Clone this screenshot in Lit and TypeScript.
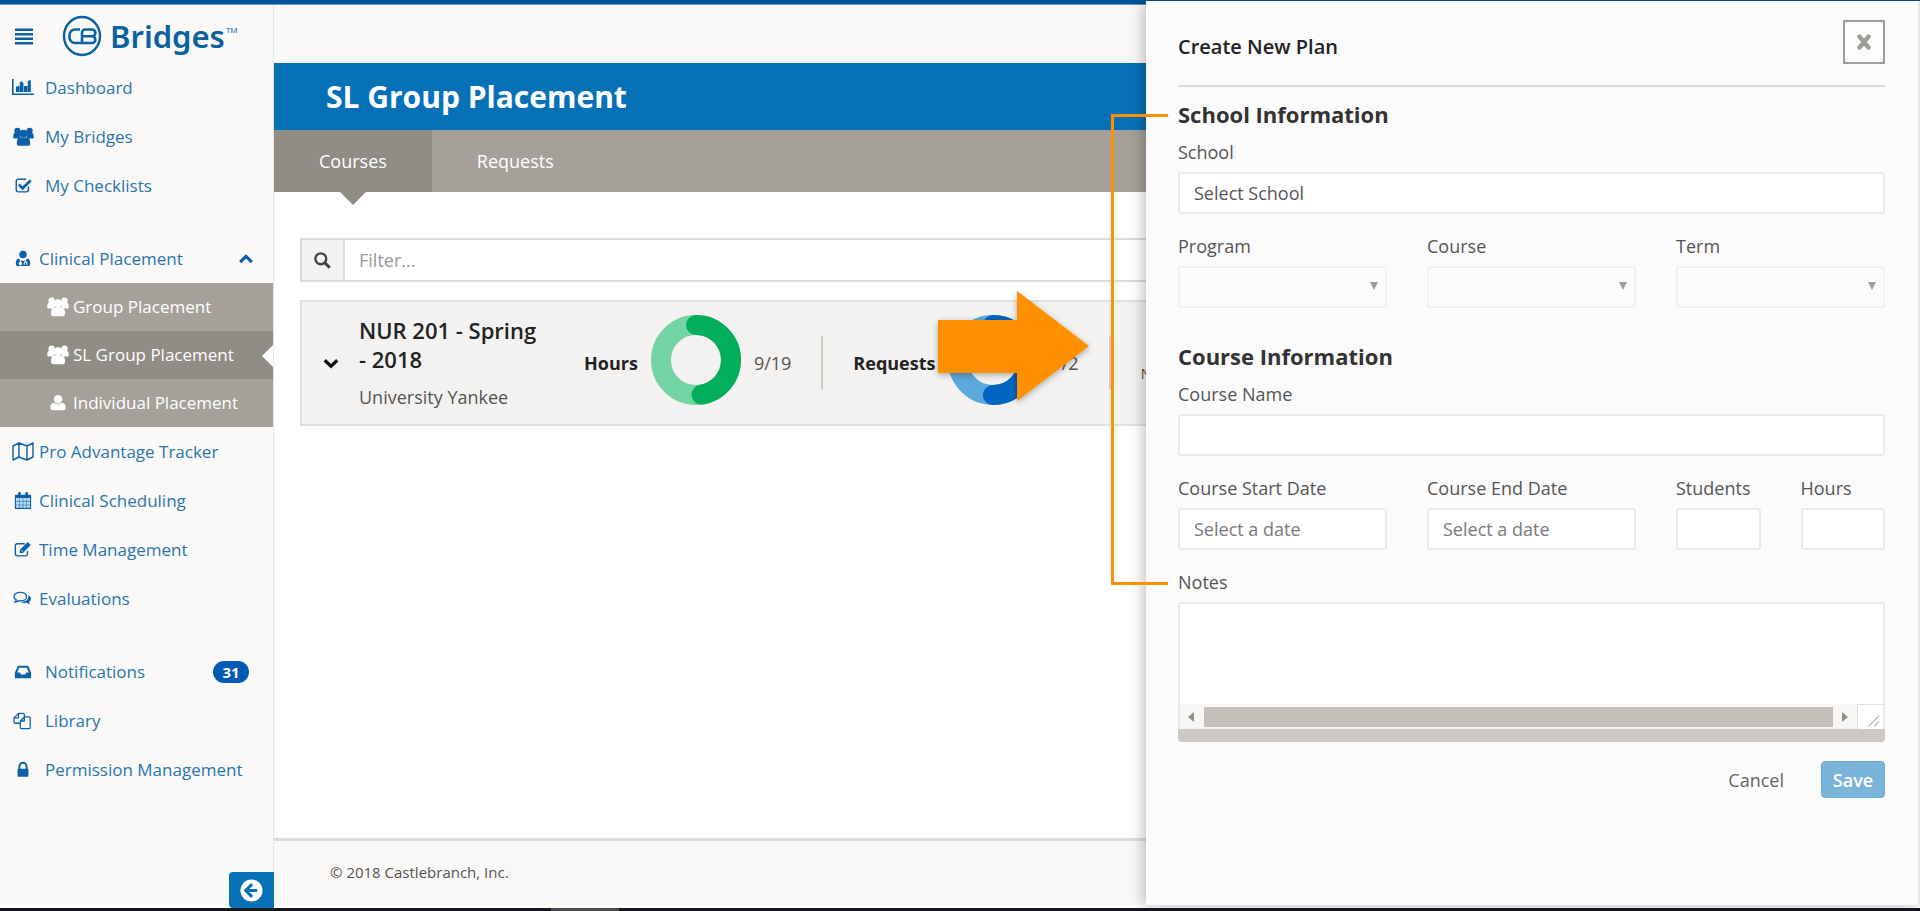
import { LitElement, html, css, svg, nothing } from "lit";
import { customElement, property } from "lit/decorators.js";

const icons: Record<string, any> = {
  bars: svg`<path d="M1 2.500h18v2.500H1zM1 7h18v2.500H1zM1 11.500h18v2.500H1zM1 16h18v2.500H1z"/>`,
  chart: svg`<path d="M0 1h1.600v14.400H22V17H0z"/><path d="M4 8.500L7.500 8v6H4zM7.800 4.500l1.700-1.500 2 2.500v8.500H7.800zM12 8h3.500v6H12zM15.800 3l3-1v12h-3z"/>`,
  users: svg`<circle cx="4.600" cy="3.600" r="3.200"/><circle cx="17.400" cy="3.600" r="3.200"/><path d="M.3 11V8.800c0-2 1-3.300 2.700-3.300h4L7.500 11.500H1.700c-.9 0-1.400-.2-1.400-.5zM21.700 11V8.800c0-2-1-3.300-2.700-3.300h-4l-.5 6h5.800c.9 0 1.400-.2 1.400-.5z"/><circle cx="11" cy="6.600" r="4.300"/><path d="M4 16.500c0-3.600 1-6 3.400-6h7.200c2.400 0 3.400 2.400 3.400 6 0 1.700-.9 2.700-2.300 2.700H6.300C4.900 19.200 4 18.200 4 16.500z"/>`,
  check: svg`<path d="M16 10.500v3.700A2.300 2.300 0 0 1 13.700 16.500H4.800A2.300 2.300 0 0 1 2.500 14.200V4.800A2.300 2.300 0 0 1 4.800 2.500H13.500" fill="none" stroke="currentColor" stroke-width="1.600"/><path d="M5.500 8.500l4 4L18.500 4" fill="none" stroke="currentColor" stroke-width="3"/>`,
  medic: svg`<circle cx="10" cy="5" r="4.200"/><path d="M2 15.500c0-3.700 1-5.700 3.200-6l1.300 1.300v2.500a1.800 1.800 0 1 0 1.200 0V11.500c1.500.8 3.200.8 4.700 0v1.300a2 2 0 0 0-1.600 2v1.700h1.200v-1.700c0-1.100 1.800-1.100 1.800 0v1.700H15v-1.700a2 2 0 0 0-1.500-2v-2l1.400-1.300c2.100.4 3.100 2.300 3.100 6 0 1.500-1 2.300-2.300 2.300H4.300C3 17.800 2 17 2 15.500z"/>`,
  user: svg`<circle cx="10" cy="5.800" r="4.700"/><path d="M1.500 15.300c0-3.400 1.200-5.500 4-5.700 2.500 2.200 6.500 2.200 9 0 2.800.2 4 2.300 4 5.700 0 1.700-1 2.700-2.500 2.700H4c-1.500 0-2.500-1-2.500-2.700z"/>`,
  map: svg`<path d="M1 4l6-3 8 3 6-3v14l-6 3-8-3-6 3zM7 1v14M15 4v14" fill="none" stroke="currentColor" stroke-width="1.400" stroke-linejoin="round"/>`,
  calendar: svg`<path d="M1 4.300C1 3.500 1.500 3 2.300 3h15.400c.8 0 1.300.5 1.300 1.300V7H1z"/><rect x="4.500" y="0" width="3" height="5" rx="1.200"/><rect x="12.500" y="0" width="3" height="5" rx="1.200"/><path d="M1.600 6h16.800v12.200H1.600z" fill="#b8dcf3" stroke="currentColor" stroke-width="1.200"/><path d="M6 7v11M10 7v11M14 7v11M2 10.500h16M2 14.500h16" stroke="currentColor" stroke-width=".6"/>`,
  edit: svg`<path d="M15 11v3.200A2.300 2.300 0 0 1 12.700 16.500H3.800A2.300 2.300 0 0 1 1.500 14.200V5.300A2.300 2.300 0 0 1 3.800 3H12" fill="none" stroke="currentColor" stroke-width="1.500"/><path d="M6.500 9.800L15.300 1l3.400 3.400-8.800 8.800H6.500z"/><path d="M8 10l1.800 1.800" stroke="#faf9f7" stroke-width="1"/>`,
  comments: svg`<path d="M8 2.700c4 0 7 2 7 4.700s-3 4.700-7 4.700c-.7 0-1.300 0-1.900-.2-1 .8-2.300 1.300-3.800 1.400.7-.7 1.100-1.500 1.200-2.400C1.800 10 1 8.800 1 7.400c0-2.700 3-4.700 7-4.700z" fill="none" stroke="currentColor" stroke-width="1.500"/><path d="M16.600 5.500c2 .9 3.200 2.400 3.200 4.200 0 1.500-.8 2.700-2.100 3.600.2.900.6 1.700 1.300 2.400-1.600 0-2.900-.6-3.900-1.400-2.200.4-4.700 0-6.300-1.100 4.700 0 8.200-2.400 8.200-5.800 0-.7-.1-1.300-.4-1.900z"/>`,
  inbox: svg`<path d="M5.500 3h9c.8 0 1.300.3 1.600 1L19 10.500V16c0 .7-.4 1-1 1H2c-.6 0-1-.3-1-1v-5.500L3.900 4c.3-.7.800-1 1.600-1zm.3 2.200L3.600 10.500H6.500l1.200 2.300h4.600l1.200-2.300h2.900l-2.200-5.300z" fill-rule="evenodd"/>`,
  copy: svg`<path d="M8 12.500H2.300A1.300 1.300 0 0 1 1 11.200V6.500L6 1.500h5.200a1.300 1.300 0 0 1 1.300 1.300V5M6 1.500v5H1M8 10v7.200a1.300 1.300 0 0 0 1.300 1.300h8.400a1.300 1.300 0 0 0 1.300-1.300V6.800a1.300 1.300 0 0 0-1.300-1.300H12.500zM12.500 5.500V10H8" fill="none" stroke="currentColor" stroke-width="1.400" stroke-linejoin="round"/>`,
  lock: svg`<path d="M6 9V6a4 4 0 0 1 8 0v3" fill="none" stroke="currentColor" stroke-width="2.200"/><rect x="4" y="8.500" width="12" height="9" rx="1"/>`,
  up: svg`<path d="M3.500 13.500L10 7l6.500 6.500" fill="none" stroke="currentColor" stroke-width="3.400"/>`,
  down: svg`<path d="M3 7l7 6.500L17 7" fill="none" stroke="currentColor" stroke-width="3.800"/>`,
  search: svg`<circle cx="8.200" cy="8.200" r="5.700" fill="none" stroke="currentColor" stroke-width="2.500"/><path d="M12.500 12.500l5.200 5.200" stroke="currentColor" stroke-width="3"/>`,
  back: svg`<circle cx="10" cy="10" r="9.600" fill="#fff"/><path d="M10.500 4.500L5 10l5.500 5.500M5.500 10h9.500" fill="none" stroke="#0771b8" stroke-width="2.600"/>`,
  close: svg`<path d="M5 4l10 12M15 4L5 16" stroke="currentColor" stroke-width="5" stroke-linecap="round"/>`,
};

const icon = (name: string, size = 20, width = size) =>
  svg`<svg class="icon" width=${width} height=${size} viewBox=${`0 0 ${width > size ? 22 : 20} 20`} fill="currentColor" aria-hidden="true">${icons[name]}</svg>`;

@customElement("progress-ring")
class ProgressRing extends LitElement {
  @property({ type: Number }) done = 0;
  @property({ type: Number }) total = 1;
  @property() tone = "green";

  static styles = css`
    :host { display: block; flex: none; width: 90px; height: 90px; }
    .ring { display: block; fill: none; stroke-width: 20; }
    .arc { stroke-linecap: round; }
    .green .track { stroke: #74d4a4; }
    .green .arc { stroke: #00ae5c; }
    .blue .track { stroke: #5ca9dc; }
    .blue .arc { stroke: #0065c1; }
  `;

  render() {
    const length = 2 * Math.PI * 35;
    const part = (this.done / this.total) * length;
    return html`<svg class="ring ${this.tone}" width="90" height="90" viewBox="0 0 90 90">
      <circle class="track" cx="45" cy="45" r="35"></circle>
      <circle class="arc" cx="45" cy="45" r="35" transform="rotate(-90 45 45)" stroke-dasharray="${part} ${length}"></circle>
    </svg>`;
  }
}

@customElement("side-nav")
class SideNav extends LitElement {
  static styles = css`
    :host { display: flex; flex-direction: column; background: #faf9f7; border-right: 1px solid #e8e6e3; color: #0a61aa; }
    * { box-sizing: border-box; }
    .brand { display: flex; align-items: center; height: 58px; padding: 4px 0 0 14px; gap: 28px; }
    .menu { display: flex; padding: 0; border: 0; background: none; color: #0a5f9f; }
    .logo { display: flex; align-items: center; gap: 8px; color: #0a62a0; font: 600 31px/40px "Noto Sans", sans-serif; text-decoration: none; }
    .tm { align-self: flex-start; margin-left: -7px; font: 400 8px/30px "Open Sans", sans-serif; }
    .icon { display: block; flex: none; }
    .group { display: flex; flex-direction: column; margin: 0 0 24px; padding: 0; list-style: none; }
    .link { display: flex; align-items: center; height: 49px; padding: 0 24px 0 12px; color: #2876ae; font: 17px/24px "Open Sans", sans-serif; text-decoration: none; }
    .glyph { display: flex; flex: none; justify-content: center; width: 22px; margin-right: 11px; color: #0a61aa; }
    .tight .glyph { margin-right: 5px; }
    .chevron { display: flex; margin-left: auto; margin-right: -6px; color: #0a5fa5; }
    .badge { margin-left: auto; width: 36px; border-radius: 11px; background: #0059b2; color: #fff; font: 700 15px/22px "Open Sans", sans-serif; text-align: center; }
    .sub { margin: 0; padding: 0; list-style: none; background: #a5a19a; }
    .sub .link { position: relative; height: 48px; padding-left: 47px; color: #fff; }
    .sub .glyph { color: #fff; margin-right: 4px; }
    .sub .active { background: #908c86; }
    .active::after { content: ""; position: absolute; right: 0; top: 14px; border: 11px solid transparent; border-left: 0; border-right-color: #fff; }
    .collapse { display: flex; align-items: center; justify-content: center; align-self: flex-end; width: 45px; height: 36px; margin: auto -1px -3px 0; padding: 0; border: 0; border-radius: 4px 0 0 4px; background: #0771b8; position: relative; z-index: 1; }
  `;

  item(name: string, label: string, extra: unknown = nothing, width = 18) {
    return html`<a class="link" href="#"><span class="glyph">${icon(name, width > 20 ? 20 : 18, width)}</span>${label}${extra}</a>`;
  }

  sub(name: string, label: string, active = false) {
    return html`<li><a class="link ${active ? "active" : ""}" href="#"><span class="glyph">${icon(name, name === "users" ? 20 : 18, name === "users" ? 22 : 18)}</span>${label}</a></li>`;
  }

  render() {
    return html`
      <div class="brand">
        <button class="menu" aria-label="Menu">${icon("bars", 20)}</button>
        <a class="logo" href="#">
          <svg width="40" height="42" viewBox="0 0 40 42" fill="none" stroke="currentColor" aria-hidden="true">
            <ellipse cx="20" cy="21" rx="18" ry="19" stroke-width="2.400"></ellipse>
            <path d="M18 14.500h-5a5.500 5.500 0 0 0-5.500 5.500v2.500a5.500 5.500 0 0 0 5.500 5.500H30a3.300 3.300 0 0 0 0-6.700H21M20 28V17.500a3 3 0 0 1 3-3h7a3.300 3.300 0 0 1 0 6.800" stroke-width="2.600"></path>
          </svg>
          <span>Bridges</span><span class="tm">TM</span>
        </a>
      </div>
      <nav>
        <div class="group">
          ${this.item("chart", "Dashboard", nothing, 22)}
          ${this.item("users", "My Bridges", nothing, 21)}
          ${this.item("check", "My Checklists")}
        </div>
        <div class="group tight">
          ${this.item("medic", "Clinical Placement", html`<span class="chevron">${icon("up", 18)}</span>`)}
          <ul class="sub">
            ${this.sub("users", "Group Placement")}
            ${this.sub("users", "SL Group Placement", true)}
            ${this.sub("user", "Individual Placement")}
          </ul>
          ${this.item("map", "Pro Advantage Tracker", nothing, 22)}
          ${this.item("calendar", "Clinical Scheduling")}
          ${this.item("edit", "Time Management")}
          ${this.item("comments", "Evaluations", nothing, 20)}
        </div>
        <div class="group">
          ${this.item("inbox", "Notifications", html`<span class="badge">31</span>`)}
          ${this.item("copy", "Library", nothing, 20)}
          ${this.item("lock", "Permission Management")}
        </div>
      </nav>
      <button class="collapse" aria-label="Collapse menu">${icon("back", 23)}</button>
    `;
  }
}

@customElement("plan-panel")
class PlanPanel extends LitElement {
  static styles = css`
    :host { display: block; background: #fbfbfb; border-right: 2px solid #e9e7e5; box-shadow: -2px 0 14px rgba(0, 0, 0, 0.28); padding: 19px 33px 0 32px; color: #555; font: 18px/24px "Open Sans", sans-serif; }
    * { box-sizing: border-box; }
    .head { display: flex; align-items: flex-start; justify-content: space-between; height: 67px; border-bottom: 2px solid #dcdad6; }
    .title { margin: 14px 0 0; color: #222; font: 600 20px/26px "Open Sans", sans-serif; }
    .close { display: flex; align-items: center; justify-content: center; width: 42px; height: 44px; padding: 0; border: 2px solid #a09c97; background: #fdfdfd; color: #a09c97; }
    .section { margin: 12px 0 11px; color: #333; font: 700 22px/30px "Open Sans", sans-serif; }
    .section.later { margin-top: 33px; }
    .row { display: grid; grid-template-columns: repeat(6, 1fr); column-gap: 40px; margin-bottom: 20px; }
    .field { display: flex; flex-direction: column; gap: 8px; grid-column: span 2; }
    .field.full { grid-column: span 6; }
    .field.narrow { grid-column: span 1; }
    .label { color: #555; line-height: 24px; }
    .control { width: 100%; height: 42px; margin: 0; padding: 0 14px; border: 2px solid #ebeae8; border-radius: 3px; outline: 0; background: #fff; color: #555; font: 18px/24px "Open Sans", sans-serif; appearance: none; }
    .control::placeholder { color: #7a7a7a; opacity: 1; }
    .control:disabled { background: #fcfcfc; border-color: #f2f1f0; opacity: 1; }
    .pick { display: grid; align-items: center; }
    .pick .control, .caret { grid-area: 1 / 1; }
    .caret { justify-self: end; margin: 0 9px 2px 0; fill: #a19d98; pointer-events: none; }
    .notes { display: block; width: 100%; height: 102px; margin: 0; padding: 8px 14px; border: 2px solid #ebeae8; border-bottom: 0; border-radius: 3px 3px 0 0; outline: 0; background: #fff; resize: none; font: 18px/24px "Open Sans", sans-serif; }
    .scroll { display: flex; align-items: center; height: 25px; background: #f7f6f4; border: solid #ebeae8; border-width: 0 2px; fill: #908c87; }
    .arrow { flex: none; width: 24px; }
    .thumb { flex: 1; height: 20px; background: #c4c0b9; }
    .grip { flex: none; width: 26px; height: 25px; border: solid #e3e1de; border-width: 1px 0 0 1px; background: #fff; stroke: #777; }
    .base { height: 13px; border-radius: 0 0 4px 4px; background: #cdc9c2; }
    .actions { display: flex; align-items: center; justify-content: flex-end; gap: 37px; margin-top: 19px; }
    .cancel { padding: 0; border: 0; background: none; color: #666; font: 18px/24px "Open Sans", sans-serif; }
    .save { width: 64px; height: 37px; padding: 0; border: 1px solid #6aabd2; border-radius: 4px; background: #7ab4d9; color: #fff; font: 600 18px/24px "Open Sans", sans-serif; }
    .bracket { position: absolute; left: -35px; top: 113px; width: 57px; height: 471px; border: 3px solid #ff9100; border-right: 0; }
    .pointer { position: absolute; left: -208px; top: 290px; fill: #ff9100; filter: drop-shadow(0 2px 3px rgba(0, 0, 0, 0.3)); overflow: visible; }
  `;

  select(id: string, label: string) {
    return html`<div class="field"><label class="label" for=${id}>${label}</label>
      <span class="pick"><select class="control" id=${id} disabled></select>
      <svg class="caret" width="8" height="8" viewBox="0 0 8 8" aria-hidden="true"><path d="M0 0h8L4 8z"></path></svg></span></div>`;
  }

  input(id: string, label: string, size = "", placeholder = "") {
    return html`<div class="field ${size}"><label class="label" for=${id}>${label}</label>
      <input class="control" id=${id} type="text" placeholder=${placeholder || nothing}></div>`;
  }

  render() {
    return html`
      <div class="head">
        <h2 class="title">Create New Plan</h2>
        <button class="close" aria-label="Close">${icon("close", 18)}</button>
      </div>
      <form>
        <h3 class="section">School Information</h3>
        <div class="row"><div class="field full"><label class="label" for="school">School</label>
          <select class="control" id="school"><option>Select School</option></select></div></div>
        <div class="row">
          ${this.select("program", "Program")}${this.select("course", "Course")}${this.select("term", "Term")}
        </div>
        <h3 class="section later">Course Information</h3>
        <div class="row">${this.input("name", "Course Name", "full")}</div>
        <div class="row">
          ${this.input("start", "Course Start Date", "", "Select a date")}
          ${this.input("end", "Course End Date", "", "Select a date")}
          ${this.input("students", "Students", "narrow")}
          ${this.input("hours", "Hours", "narrow")}
        </div>
        <div class="field"><label class="label" for="notes">Notes</label>
          <div>
            <textarea class="notes" id="notes"></textarea>
            <div class="scroll" aria-hidden="true">
              <svg class="arrow" height="12" viewBox="0 0 24 12"><path d="M14 1v10L8 6z"></path></svg>
              <div class="thumb"></div>
              <svg class="arrow" height="12" viewBox="0 0 24 12"><path d="M9 1v10l6-5z"></path></svg>
              <svg class="grip" viewBox="0 0 26 25"><path d="M11 22L22 11M17 22l5-5"></path></svg>
            </div>
            <div class="base"></div>
          </div>
        </div>
        <div class="actions">
          <button class="cancel" type="button">Cancel</button>
          <button class="save" type="button">Save</button>
        </div>
      </form>
      <div class="bracket"></div>
      <svg class="pointer" width="151" height="110" viewBox="0 0 151 110" aria-hidden="true"><path d="M0 29h79V0l72 55-72 55V82H0z"></path></svg>
    `;
  }
}

@customElement("app-root")
class AppRoot extends LitElement {
  static styles = css`
    :host { display: grid; grid-template: 5px 1fr 6px / 274px 1fr; position: relative; min-height: 100vh; overflow: hidden; background: #fff; color: #333; font: 18px/26px "Open Sans", sans-serif; }
    * { box-sizing: border-box; }
    .stripe { grid-column: 1 / -1; background: #00559a; border-bottom: 1px solid #5f9dc6; }
    .page { display: flex; flex-direction: column; min-width: 0; }
    .top { height: 58px; background: #faf9f7; }
    .banner { display: flex; align-items: center; height: 67px; padding-left: 52px; background: #0771b8; color: #fff; }
    .heading { margin: 0; font: 700 30px/40px "Open Sans", sans-serif; }
    .tabs { display: flex; height: 62px; background: #a5a19a; }
    .tab { position: relative; display: flex; align-items: center; padding: 0 45px; color: #fff; text-decoration: none; }
    .tab.on { background: #908c86; }
    .tab.on::after { content: ""; position: absolute; left: calc(50% - 13px); top: 100%; border: 13px solid transparent; border-bottom: 0; border-top-color: #908c86; }
    .content { flex: 1; display: flex; flex-direction: column; gap: 18px; padding: 46px 26px 0; }
    .filter { display: flex; height: 44px; border: 2px solid #dddbd7; }
    .addon { display: flex; align-items: center; justify-content: center; width: 43px; border-right: 2px solid #dddbd7; background: #f3f2f0; color: #444; }
    .query { flex: 1; min-width: 0; padding: 0 14px; border: 0; outline: 0; background: #fff; font: 18px/24px "Open Sans", sans-serif; }
    .query::placeholder { color: #999; opacity: 1; }
    .card { display: flex; align-items: center; height: 126px; border: 2px solid #e2e0dd; background: #f3f2f0; white-space: nowrap; overflow: hidden; }
    .toggle { display: flex; flex: none; justify-content: center; width: 57px; padding: 0; border: 0; background: none; color: #111; }
    .info { flex: none; width: 185px; margin-right: 40px; white-space: normal; }
    .course { margin: 0 0 10px; color: #222; font: 600 22px/29px "Open Sans", sans-serif; }
    .school { margin: 0; color: #555; }
    .stat { display: flex; flex: none; align-items: center; gap: 13px; height: 54px; padding-right: 30px; margin-right: 30px; border-right: 2px solid #d0cdc8; }
    .name { color: #222; font-weight: 700; }
    .ring { margin-bottom: 6px; }
    .count { color: #555; }
    .more { margin-top: 22px; font-size: 14px; color: #6b4a2a; }
    .foot { height: 67px; padding: 17px 56px; border-top: 3px solid #dfddda; background: #f9f8f6; color: #555; font: 15px/28px "Open Sans", sans-serif; }
    .panel { position: absolute; top: 1px; right: 0; bottom: 6px; width: 774px; }
    .dock { grid-column: 1 / -1; display: flex; margin-top: 3px; padding-left: 551px; background: #15171c; }
    .task { width: 68px; background: #4a4c50; }
  `;

  render() {
    return html`
      <div class="stripe"></div>
      <side-nav></side-nav>
      <main class="page">
        <div class="top"></div>
        <header class="banner"><h1 class="heading">SL Group Placement</h1></header>
        <nav class="tabs"><a class="tab on" href="#">Courses</a><a class="tab" href="#">Requests</a></nav>
        <section class="content">
          <div class="filter">
            <label class="addon" for="filter" aria-label="Filter">${icon("search", 19)}</label>
            <input class="query" id="filter" type="text" placeholder="Filter...">
          </div>
          <article class="card">
            <button class="toggle" aria-label="Expand">${icon("down", 18)}</button>
            <div class="info">
              <h2 class="course">NUR 201 - Spring -&nbsp;2018</h2>
              <p class="school">University Yankee</p>
            </div>
            <div class="stat"><span class="name">Hours</span><progress-ring class="ring" done="9" total="19"></progress-ring><span class="count">9/19</span></div>
            <div class="stat"><span class="name">Requests</span><progress-ring class="ring" done="1" total="2" tone="blue"></progress-ring><span class="count">1/2</span></div>
            <span class="more">N</span>
          </article>
        </section>
        <footer class="foot">© 2018 Castlebranch, Inc.</footer>
      </main>
      <div class="dock"><div class="task"></div></div>
      <plan-panel class="panel"></plan-panel>
    `;
  }
}
